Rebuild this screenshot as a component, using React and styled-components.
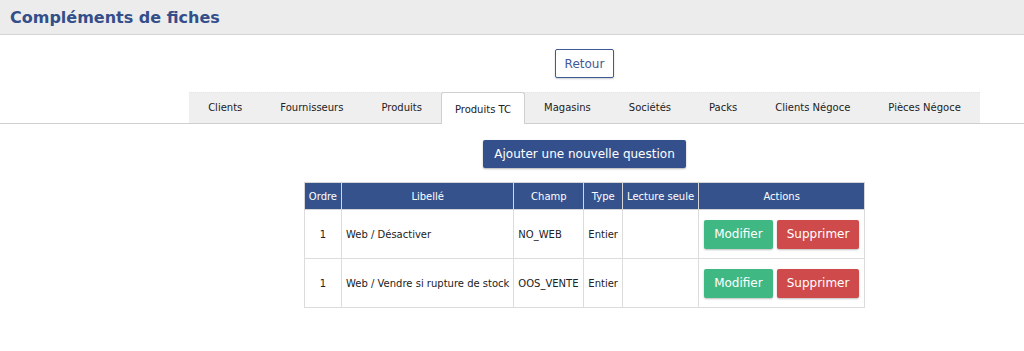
import React from 'react'
import styled, { createGlobalStyle } from 'styled-components';

const GlobalStyle = createGlobalStyle`
    body {
        margin: 0;
        background: #fff;
        font-family: "DejaVu Sans", Verdana, sans-serif;
        font-size: 10px;
        color: #222;
    }
`;

const Header = styled.div`
    height: 34px;
    background: #ececec;
    border-bottom: 1px solid #d4d4d4;
    display: flex;
    align-items: center;
    padding-left: 10px;
`;

const Title = styled.h1`
    margin: 0;
    font-size: 16px;
    font-weight: bold;
    color: #344e8a;
`;

const Content = styled.div`
    padding-left: 145px;
    display: flex;
    flex-direction: column;
    align-items: center;
`;

const BackButton = styled.button`
    margin-top: 14px;
    height: 29px;
    padding: 0 9px;
    background: #fff;
    border: 1px solid #3f5a94;
    border-radius: 2px;
    color: #3f5a94;
    font-family: inherit;
    font-size: 12px;
    box-shadow: 0 1px 2px rgba(0,0,0,0.2);
`;

const TabBar = styled.div`
    margin-top: 14px;
    padding-left: 145px;
    display: flex;
    justify-content: center;
    border-bottom: 1px solid #cfcfcf;
`;

const Tabs = styled.div`
    display: flex;
    background: #efefef;
    border-top: 1px dotted #e4e4e4;
`;

const Tab = styled.div`
    height: 29px;
    padding: 0 ${props => props.pad}px;
    display: flex;
    align-items: center;
    font-size: 10px;
    color: #222;
    ${props => props.active && `
        background: #fff;
        border: 1px solid #cfcfcf;
        border-bottom: none;
        border-radius: 3px 3px 0 0;
        margin-top: -1px;
        margin-bottom: -1px;
        padding-top: 2px;
        box-sizing: border-box;
        height: 32px;
    `}
`;

const AddButton = styled.button`
    margin-top: 16px;
    height: 28px;
    padding: 0 11px;
    background: #34508c;
    border: none;
    border-radius: 2px;
    color: #fff;
    font-family: inherit;
    font-size: 12px;
    box-shadow: 0 1px 2px rgba(0,0,0,0.3);
`;

const Table = styled.table`
    margin-top: 14px;
    border-collapse: collapse;
    font-size: 10px;
`;

const Th = styled.th`
    background: #36528d;
    color: #fff;
    font-weight: normal;
    height: 27px;
    padding: 0 4px;
    border: 1px solid #d6d6d6;
    white-space: nowrap;
    width: ${props => props.w}px;
    box-sizing: border-box;
`;

const Td = styled.td`
    height: 48px;
    padding: 0 4px;
    border: 1px solid #dcdcdc;
    text-align: ${props => props.center ? 'center' : 'left'};
    white-space: nowrap;
`;

const Actions = styled.div`
    display: flex;
    gap: 4px;
    padding-left: 1px;
`;

const ActionButton = styled.button`
    height: 29px;
    padding: 0 ${props => props.pad}px;
    border: none;
    border-radius: 2px;
    background: ${props => props.color};
    color: #fff;
    font-family: inherit;
    font-size: 12px;
    box-shadow: 0 1px 2px rgba(0,0,0,0.25);
`;

const tabs = [
    ['Clients', 19],
    ['Fournisseurs', 19],
    ['Produits', 19],
    ['Produits TC', 13, true],
    ['Magasins', 19],
    ['Sociétés', 19],
    ['Packs', 19],
    ['Clients Négoce', 19],
    ['Pièces Négoce', 19],
];

const rows = [
    ['1', 'Web / Désactiver', 'NO_WEB', 'Entier'],
    ['1', 'Web / Vendre si rupture de stock', 'OOS_VENTE', 'Entier'],
];

const App = () => {
  return (
    <>
        <GlobalStyle/>
        <Header>
            <Title>Compléments de fiches</Title>
        </Header>
        <Content>
            <BackButton>Retour</BackButton>
        </Content>
        <TabBar>
            <Tabs>
                {tabs.map(([label, pad, active]) => (
                    <Tab key={label} pad={pad} active={active}>{label}</Tab>
                ))}
            </Tabs>
        </TabBar>
        <Content>
            <AddButton>Ajouter une nouvelle question</AddButton>
            <Table>
                <thead>
                    <tr>
                        <Th w={37}>Ordre</Th>
                        <Th w={172}>Libellé</Th>
                        <Th w={70}>Champ</Th>
                        <Th w={37}>Type</Th>
                        <Th w={76}>Lecture seule</Th>
                        <Th w={166}>Actions</Th>
                    </tr>
                </thead>
                <tbody>
                    {rows.map((r, i) => (
                        <tr key={i}>
                            <Td center>{r[0]}</Td>
                            <Td>{r[1]}</Td>
                            <Td>{r[2]}</Td>
                            <Td>{r[3]}</Td>
                            <Td></Td>
                            <Td>
                                <Actions>
                                    <ActionButton color="#3fb883" pad={10}>Modifier</ActionButton>
                                    <ActionButton color="#cf4a4a" pad={10}>Supprimer</ActionButton>
                                </Actions>
                            </Td>
                        </tr>
                    ))}
                </tbody>
            </Table>
        </Content>
    </>
  )
}

export default App
